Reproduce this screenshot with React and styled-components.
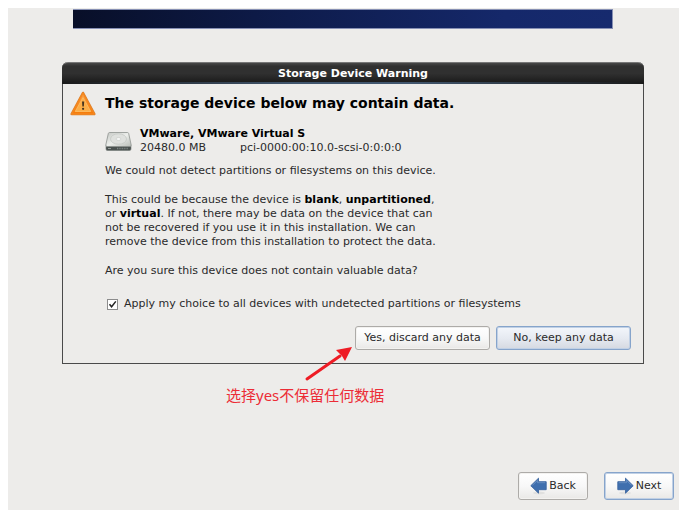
import React, { useState } from 'react'
import styled, { createGlobalStyle } from 'styled-components'

const GlobalStyle = createGlobalStyle`
  * {
    box-sizing: border-box;
  }

  body {
    margin: 0;
    background: #fff;
    color: #2a2a2a;
    font: 11px/14px 'DejaVu Sans', sans-serif;
  }
`

const Page = styled.div`
  display: flex;
  min-height: 100vh;
  padding: 8px 13px 3px 8px;
`

const Installer = styled.main`
  display: flex;
  flex: 1;
  flex-direction: column;
  background: #edecea;
`

const Banner = styled.header`
  height: 20px;
  margin: 1px 66px 33px 65px;
  border: 1px solid #8790b4;
  border-left: 0;
  background: linear-gradient(90deg, #080f28 0%, #0e1c4c 40%, #15286a 80%, #162a6e 100%);
`

const Dialog = styled.section`
  margin: 0 35px 0 54px;
  border: 1px solid #4a4a4a;
  border-top: 0;
  border-radius: 6px 6px 0 0;
`

const TitleBar = styled.h1`
  height: 22px;
  margin: 0 -1px;
  border-top: 1px solid #777;
  border-radius: 6px 6px 0 0;
  background:
    linear-gradient(90deg, #1a1a1a, #41566e 40%, #41566e 60%, #1a1a1a) bottom / 100% 2px no-repeat,
    linear-gradient(#484848, #303030 15%, #303030 50%, #181818);
  color: #fff;
  font-size: 11px;
  line-height: 21px;
  text-align: center;
`

const DialogBody = styled.div`
  display: grid;
  grid-template-columns: 26px 1fr;
  column-gap: 9px;
  padding: 7px 12px 13px 7px;
`

const Content = styled.div`
  display: flex;
  flex-direction: column;
  align-items: flex-start;
`

const Heading = styled.h2`
  margin: 4px 0 15px;
  font-size: 14px;
  line-height: 17px;
  color: #000;
`

const Device = styled.div`
  display: flex;
  align-items: center;
  gap: 8px;
  margin-bottom: 9px;
`

const DeviceDetails = styled.div`
  display: flex;
  gap: 34px;
`

const Strong = styled.strong`
  color: #000;
`

const Text = styled.p`
  max-width: 350px;
  margin: 0 0 15px;
`

const CheckLabel = styled.label`
  display: flex;
  align-items: center;
  gap: 6px;
  margin: 4px 0 15px 2px;
`

const Checkbox = styled.input`
  appearance: none;
  width: 11px;
  height: 11px;
  margin: 0;
  border: 1px solid #8c8c8c;
  background: #fff;

  &:checked {
    background: #fff url("data:image/svg+xml,%3Csvg xmlns='http://www.w3.org/2000/svg' viewBox='0 0 9 9'%3E%3Cpath d='M1.5 4.2 3.6 6.8 7.8 1.4' fill='none' stroke='%23222' stroke-width='1.5'/%3E%3C/svg%3E");
  }
`

const Actions = styled.div`
  display: flex;
  justify-content: flex-end;
  gap: 6px;
  grid-column: 1 / -1;
`

const Button = styled.button`
  display: flex;
  align-items: center;
  justify-content: center;
  gap: 2px;
  width: ${props => props.$width}px;
  height: ${props => props.$tall ? 28 : 24}px;
  padding: 0;
  border: 1px solid ${props => props.$focused ? '#86a4cb' : '#adaba8'};
  border-radius: 3px;
  background: ${props => props.$shaded
    ? 'linear-gradient(#f3f6fb, #e6eaf1 50%, #d5d9e1)'
    : 'linear-gradient(#fff, #f8f8f8 50%, #e9e8e6)'};
  box-shadow: ${props => props.$focused ? 'inset 0 0 0 1px #c0d0e5' : 'inset 0 0 0 1px #f3f2f0'};
  color: #2a2a2a;
  font: inherit;
`

const Note = styled.p`
  position: relative;
  align-self: flex-start;
  margin: 21px 0 0 218px;
  color: #ec2c36;
  font: 15px/20px 'Noto Sans', 'Noto Sans CJK SC', sans-serif;
`

const NoteArrow = styled.svg`
  position: absolute;
  left: 76px;
  bottom: 22px;
`

const Footer = styled.footer`
  display: flex;
  justify-content: flex-end;
  gap: 16px;
  margin-top: auto;
  padding: 0 5px 10px;
`

const WarningIcon = () => (
  <svg width="26" height="26" viewBox="0 0 26 26" aria-hidden="true">
    <defs>
      <linearGradient id="warning" x2="0" y2="1">
        <stop stopColor="#f9a04a" />
        <stop offset="1" stopColor="#f57a06" />
      </linearGradient>
    </defs>
    <path d="M13 2 24.3 23H1.7Z" fill="url(#warning)" stroke="#d9822f" strokeWidth="2.6" strokeLinejoin="round" />
    <path d="M13 2 24.3 23H1.7Z" fill="url(#warning)" stroke="#f5871f" strokeWidth="1.4" strokeLinejoin="round" />
    <path d="M13 6.5 20.8 20.5H5.2Z" fill="#fbae48" stroke="#fcc06a" strokeWidth=".8" strokeLinejoin="round" />
    <path d="M12 10.5h2.2l-.4 5h-1.4Z" fill="#453420" />
    <circle cx="13.1" cy="17.8" r="1.1" fill="#453420" />
  </svg>
)

const DiskIcon = () => (
  <svg width="27" height="21" viewBox="0 0 27 21" aria-hidden="true">
    <defs>
      <linearGradient id="disk" x2="1" y2="1">
        <stop stopColor="#c5c8c4" />
        <stop offset=".5" stopColor="#eceeeb" />
        <stop offset="1" stopColor="#b9bdb8" />
      </linearGradient>
    </defs>
    <path d="M1 14.5h25v3.6q0 1.4-1.5 1.4h-22Q1 19.5 1 18Z" fill="#4b5250" stroke="#747a77" strokeWidth=".6" />
    <path d="M4.6 1.5h17.8q1 0 1.3 1l2.5 11.5q.2 1.5-1.2 1.5H2Q.6 15.5.8 14L3.3 2.5q.3-1 1.3-1Z" fill="url(#disk)" stroke="#8d928e" strokeWidth=".8" />
    <ellipse cx="13.5" cy="8" rx="8" ry="5.2" fill="#dfe1de" stroke="#c2c5c1" strokeWidth=".7" />
    <ellipse cx="13.5" cy="8" rx="2.4" ry="1.5" fill="#f5f6f5" stroke="#bfc2be" strokeWidth=".5" />
    <path d="M12 17.5h11" stroke="#7d8582" strokeWidth="1.3" strokeDasharray="1 .7" />
    <path d="M3 17.5h3" stroke="#a9afac" strokeWidth=".8" />
  </svg>
)

const BackIcon = () => (
  <svg width="17" height="18" viewBox="0 0 17 18" aria-hidden="true">
    <ellipse cx="9" cy="16" rx="6" ry="1.5" fill="#e0e0df" />
    <path d="M.8 8.7 8.5 1.2v3.5h7.7v8H8.5v3.5Z" fill="#3f6fae" stroke="#3c66a0" strokeWidth=".9" strokeLinejoin="round" />
    <path d="M2.5 8.3 7.5 3.5v2.2h7.7" fill="none" stroke="#7298c8" strokeWidth=".7" />
  </svg>
)

const NextIcon = () => (
  <svg width="17" height="18" viewBox="0 0 17 18" aria-hidden="true">
    <ellipse cx="8" cy="16" rx="6" ry="1.5" fill="#e0e0df" />
    <path d="M16.2 8.7 8.5 1.2v3.5H.8v8h7.7v3.5Z" fill="#3f6fae" stroke="#3c66a0" strokeWidth=".9" strokeLinejoin="round" />
    <path d="M14.5 8.3 9.5 3.5v2.2H1.8" fill="none" stroke="#7298c8" strokeWidth=".7" />
  </svg>
)

const App = () => {
  const [applyToAll, setApplyToAll] = useState(true)

  return (
    <Page>
      <GlobalStyle />
      <Installer>
        <Banner />
        <Dialog role="dialog" aria-labelledby="dialog-title">
          <TitleBar id="dialog-title">Storage Device Warning</TitleBar>
          <DialogBody>
            <WarningIcon />
            <Content>
              <Heading>The storage device below may contain data.</Heading>
              <Device>
                <DiskIcon />
                <div>
                  <Strong>VMware, VMware Virtual S</Strong>
                  <DeviceDetails>
                    <span>20480.0 MB</span>
                    <span>pci-0000:00:10.0-scsi-0:0:0:0</span>
                  </DeviceDetails>
                </div>
              </Device>
              <Text>We could not detect partitions or filesystems on this device.</Text>
              <Text>
                This could be because the device is <Strong>blank</Strong>, <Strong>unpartitioned</Strong>,<br />
                or <Strong>virtual</Strong>. If not, there may be data on the device that can<br />
                not be recovered if you use it in this installation. We can<br />
                remove the device from this installation to protect the data.
              </Text>
              <Text>Are you sure this device does not contain valuable data?</Text>
              <CheckLabel>
                <Checkbox
                  type="checkbox"
                  checked={applyToAll}
                  onChange={event => setApplyToAll(event.target.checked)}
                />
                Apply my choice to all devices with undetected partitions or filesystems
              </CheckLabel>
            </Content>
            <Actions>
              <Button type="button" $width={135}>Yes, discard any data</Button>
              <Button type="button" $width={135} $focused $shaded>No, keep any data</Button>
            </Actions>
          </DialogBody>
        </Dialog>
        <Note>
          选择yes不保留任何数据
          <NoteArrow width="52" height="38" viewBox="0 0 52 38" aria-hidden="true">
            <path d="M5 34 38 11" stroke="#ee1c25" strokeWidth="3" strokeLinecap="round" />
            <path d="M50 2 43 16 40 11 34 5Z" fill="#ee1c25" />
          </NoteArrow>
        </Note>
        <Footer>
          <Button type="button" $width={70} $tall><BackIcon />Back</Button>
          <Button type="button" $width={70} $tall $focused><NextIcon />Next</Button>
        </Footer>
      </Installer>
    </Page>
  )
}

export default App
